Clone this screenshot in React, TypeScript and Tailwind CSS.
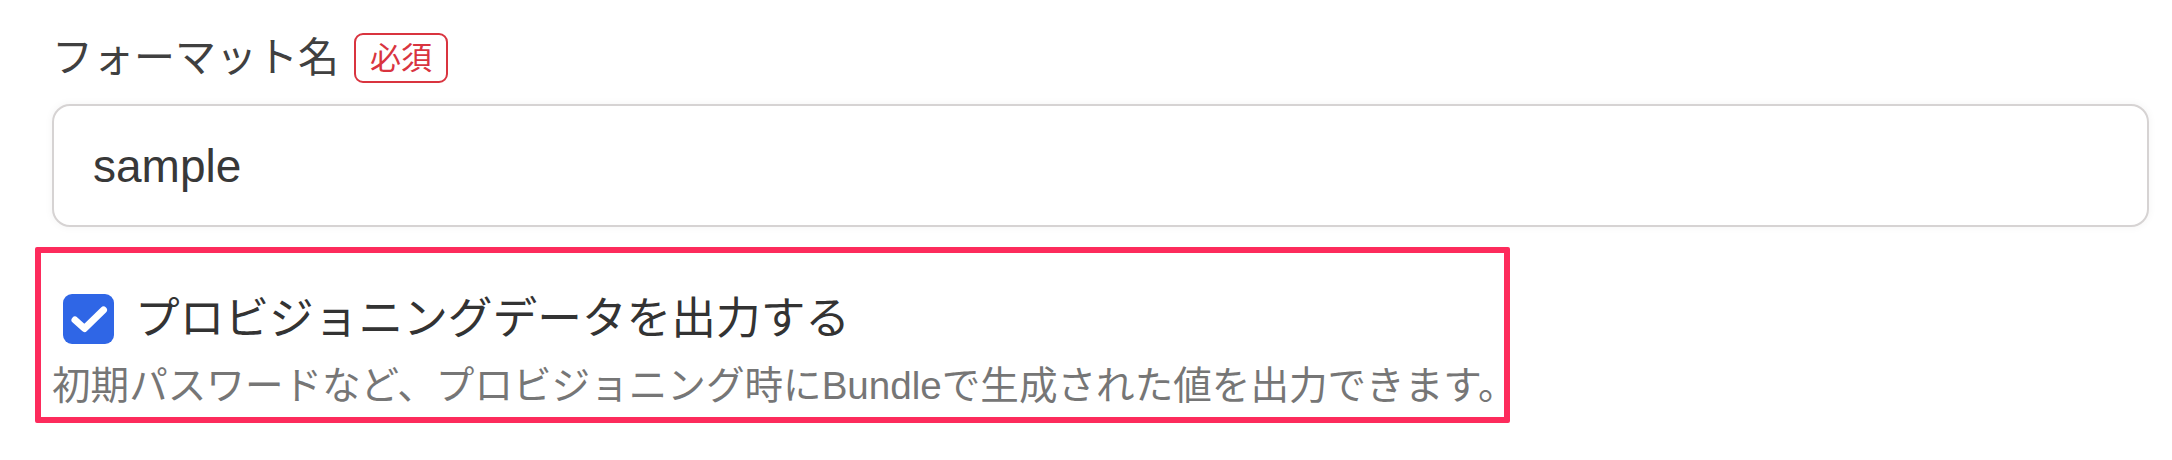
import React from "react";

const font = {
  fontFamily: '"Liberation Sans", "Noto Sans CJK JP", sans-serif',
};

export default function App() {
  return (
    <div className="w-[2172px] h-[460px] bg-white overflow-hidden" style={font}>
      <div className="pl-[52px] pr-[23px] pt-[33px]">
        {/* Label row */}
        <div className="flex items-center h-[50px]">
          <span className="text-[41px] leading-[50px] text-[#404040]">フォーマット名</span>
          <span className="ml-[15px] w-[94px] h-[50px] flex items-center justify-center border-[2.5px] border-[#d9343f] rounded-[9px] text-[31px] leading-none text-[#d9343f]">
            必須
          </span>
        </div>

        {/* Input */}
        <div className="mt-[21px] h-[123px] border-2 border-[#d6d3d3] rounded-[18px] bg-white shadow-[0_0_8px_rgba(0,0,0,0.05)] flex items-center pl-[39px]">
          <span className="text-[46px] leading-none text-[#383838]">sample</span>
        </div>

        {/* Checkbox section */}
        <div className="relative mt-[20px] pt-[47px]">
          <div className="flex items-center h-[50px]">
            <div className="ml-[11px] w-[51px] h-[50px] rounded-[9px] bg-[#2f66e6] flex items-center justify-center shrink-0">
              <svg width="50" height="50" viewBox="0 0 50 50" fill="none">
                <path
                  d="M11 26 L20.5 34.5 L39.5 16"
                  stroke="white"
                  strokeWidth="7"
                  strokeLinecap="round"
                  strokeLinejoin="round"
                />
              </svg>
            </div>
            <span className="ml-[21px] text-[44.7px] leading-[50px] text-[#333333]">
              プロビジョニングデータを出力する
            </span>
          </div>
          <div className="mt-[16px] text-[38.6px] leading-[52px] text-[#767676]">
            初期パスワードなど、プロビジョニング時にBundleで生成された値を出力できます。
          </div>

          {/* Annotation overlay */}
          <div className="absolute left-[-17px] top-0 w-[1475px] h-[176px] border-[6px] border-[#fd2b5c] rounded-[2px] pointer-events-none" />
        </div>
      </div>
    </div>
  );
}
